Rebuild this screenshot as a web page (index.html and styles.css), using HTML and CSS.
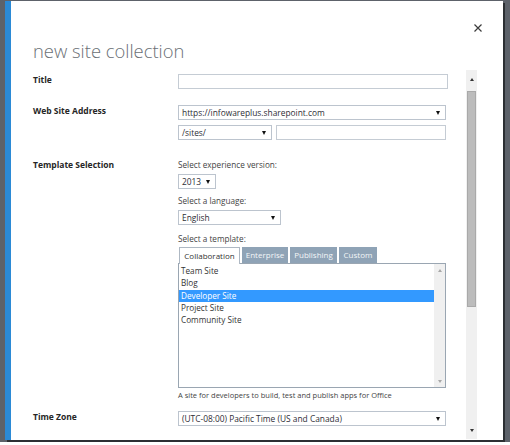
FILE: index.html
```html
<html>

<head>
  <title>new site collection</title>
  <meta charset="UTF-8">
  <link rel="stylesheet" href="styles.css">
</head>

<body>
  <div id="screen">
    <div id="dialog">
      <div class="dialog-head">
        <h1 class="dialog-title">new site collection</h1>
        <span class="dialog-close">
          <svg width="8" height="8" viewBox="0 0 8 8">
            <path d="M0.5 0.5 L7.5 7.5 M7.5 0.5 L0.5 7.5" stroke="#3c3c3c" stroke-width="1.2" fill="none"/>
          </svg>
        </span>
      </div>

      <div class="dialog-body">
        <div class="form">
          <!-- Title -->
          <div class="form-row row-title">
            <div class="form-label">Title</div>
            <div class="form-field">
              <div class="textbox tb-title"></div>
            </div>
          </div>

          <!-- Web Site Address -->
          <div class="form-row row-address">
            <div class="form-label">Web Site Address</div>
            <div class="form-field">
              <div class="select sel-domain">
                <span>https://infowareplus.sharepoint.com</span>
                <i class="caret"></i>
              </div>
              <div class="address-line">
                <div class="select sel-path">
                  <span>/sites/</span>
                  <i class="caret"></i>
                </div>
                <div class="textbox tb-url"></div>
              </div>
            </div>
          </div>

          <!-- Template Selection -->
          <div class="form-row row-template">
            <div class="form-label">Template Selection</div>
            <div class="form-field">
              <div class="hint">Select experience version:</div>
              <div class="select sel-version">
                <span>2013</span>
                <i class="caret"></i>
              </div>
              <div class="hint hint-gap">Select a language:</div>
              <div class="select sel-language">
                <span>English</span>
                <i class="caret"></i>
              </div>
              <div class="hint hint-tpl">Select a template:</div>
              <div class="tabs">
                <div class="tab tab-active tab-collab">Collaboration</div>
                <div class="tab tab-ent">Enterprise</div>
                <div class="tab tab-pub">Publishing</div>
                <div class="tab tab-custom">Custom</div>
              </div>
              <div class="listbox">
                <div class="list-items">
                  <div class="list-item">Team Site</div>
                  <div class="list-item">Blog</div>
                  <div class="list-item selected">Developer Site</div>
                  <div class="list-item">Project Site</div>
                  <div class="list-item">Community Site</div>
                </div>
                <div class="list-scroll">
                  <i class="arrow-up light"></i>
                  <i class="arrow-down light"></i>
                </div>
              </div>
              <div class="description">A site for developers to build, test and publish apps for Office</div>
            </div>
          </div>

          <!-- Time Zone -->
          <div class="form-row row-zone">
            <div class="form-label">Time Zone</div>
            <div class="form-field">
              <div class="select sel-zone">
                <span>(UTC-08:00) Pacific Time (US and Canada)</span>
                <i class="caret"></i>
              </div>
            </div>
          </div>
        </div>

        <!-- dialog scrollbar -->
        <div class="vscroll">
          <div class="vscroll-btn"><i class="arrow-up"></i></div>
          <div class="vscroll-thumb"></div>
          <div class="vscroll-track"></div>
          <div class="vscroll-btn"><i class="arrow-down"></i></div>
        </div>
      </div>
    </div>
  </div>
</body>

</html>
```

FILE: styles.css
```css
body {
  margin: 0;
  padding: 0;
  background-color: #ffffff;
  font-family: "Open Sans", "Noto Sans", sans-serif;
  color: #333333;
}

/* dimmed page behind the dialog */
#screen {
  width: 510px;
  height: 442px;
  box-sizing: border-box;
  padding: 1px 0 0 5px;
  background-color: #5d626a;
}

#dialog {
  width: 498px;
  height: 439px;
  box-sizing: border-box;
  background-color: #ffffff;
  border-left: 6px solid #2b8ad6;
  box-shadow: 2px 2px 0 #2c2f33;
  display: flex;
  flex-direction: column;
}

/** header */
.dialog-head {
  height: 69px;
  flex-shrink: 0;
  box-sizing: border-box;
  padding: 0 21px 0 22px;
  display: flex;
  justify-content: space-between;
  align-items: flex-start;
}

.dialog-title {
  margin: 38px 0 0 0;
  font-size: 18.4px;
  line-height: 24px;
  font-weight: 300;
  color: #6a6f75;
}

.dialog-close {
  margin-top: 23px;
  width: 8px;
  height: 8px;
  display: block;
}

.dialog-close svg {
  display: block;
}

/** body */
.dialog-body {
  flex: 1;
  min-height: 0;
  display: flex;
  flex-direction: row;
}

.form {
  flex: 1;
  padding: 4px 0 0 22px;
}

.form-row {
  display: grid;
  grid-template-columns: 145px 270px;
}

.form-label {
  font-size: 8.5px;
  line-height: 12px;
  font-weight: 700;
  color: #262626;
}

.row-title {
  margin-bottom: 16px;
}

.row-address {
  margin-bottom: 19px;
}

.row-template {
  margin-bottom: 10px;
}

/* inputs */
.textbox {
  height: 15px;
  box-sizing: border-box;
  border: 1px solid #c5ccd4;
  background-color: #ffffff;
}

.tb-title {
  width: 270px;
}

.address-line {
  display: flex;
  margin-top: 5px;
}

.tb-url {
  width: 170px;
  margin-left: 4px;
}

.select {
  height: 15px;
  box-sizing: border-box;
  border: 1px solid #bcc4ce;
  padding: 0 5px 0 3px;
  display: flex;
  align-items: center;
  justify-content: space-between;
  font-size: 8.4px;
  color: #2e2e36;
  white-space: nowrap;
}

.caret {
  width: 0;
  height: 0;
  border-left: 2.5px solid transparent;
  border-right: 2.5px solid transparent;
  border-top: 4px solid #111111;
}

.sel-domain,
.sel-zone {
  width: 268px;
}

.sel-path {
  width: 94px;
}

.sel-version {
  width: 38px;
  margin-top: 3px;
}

.sel-language {
  width: 103px;
  margin-top: 3px;
}

.hint {
  font-size: 8.2px;
  line-height: 12px;
  color: #444444;
}

.hint-gap {
  margin-top: 6px;
}

.hint-tpl {
  margin-top: 8px;
}

/* template tabs */
.tabs {
  display: flex;
  align-items: flex-end;
  gap: 2px;
  margin: 2px 0 0 1px;
}

.tab {
  height: 16px;
  box-sizing: border-box;
  font-size: 8px;
  line-height: 15px;
  text-align: center;
  background-color: #8fa3b6;
  color: #f3f6f8;
}

.tab-active {
  height: 17px;
  margin-bottom: -1px;
  background-color: #ffffff;
  color: #333333;
  border: 1px solid #aeb8c3;
  border-bottom: none;
}

.tab-collab {
  width: 61px;
}

.tab-ent {
  width: 46px;
}

.tab-pub {
  width: 47px;
}

.tab-custom {
  width: 38px;
}

.listbox {
  width: 268px;
  height: 125px;
  box-sizing: border-box;
  border: 1px solid #9aa6b2;
  display: flex;
}

.list-items {
  flex: 1;
  padding-top: 1px;
}

.list-item {
  font-size: 8.2px;
  line-height: 12.25px;
  padding-left: 2px;
  color: #333333;
}

.list-item.selected {
  background-color: #3399ff;
  color: #ffffff;
}

.list-scroll {
  width: 11px;
  background-color: #f0f0f0;
  display: flex;
  flex-direction: column;
  justify-content: space-between;
  align-items: center;
  padding: 5px 0 4px 0;
  box-sizing: border-box;
}

.description {
  margin-top: 1px;
  font-size: 7.5px;
  line-height: 12px;
  color: #444444;
  white-space: nowrap;
}

/* arrows */
.arrow-up,
.arrow-down {
  display: block;
  width: 0;
  height: 0;
  border-left: 2.5px solid transparent;
  border-right: 2.5px solid transparent;
}

.arrow-up {
  border-bottom: 3px solid #333333;
}

.arrow-down {
  border-top: 3px solid #333333;
}

.arrow-up.light {
  border-bottom-color: #a8a8a8;
}

.arrow-down.light {
  border-top-color: #a8a8a8;
}

/** dialog scrollbar */
.vscroll {
  width: 11px;
  margin-right: 26px;
  margin-bottom: 1px;
  background-color: #f0f0f0;
  display: flex;
  flex-direction: column;
  align-items: center;
}

.vscroll-btn {
  height: 18px;
  width: 100%;
  display: flex;
  align-items: center;
  justify-content: center;
}

.vscroll-thumb {
  width: 9px;
  height: 216px;
  margin-top: 3px;
  box-sizing: border-box;
  background-color: #bcbcbc;
  border: 1px solid #a9a9a9;
}

.vscroll-track {
  flex: 1;
}
```
